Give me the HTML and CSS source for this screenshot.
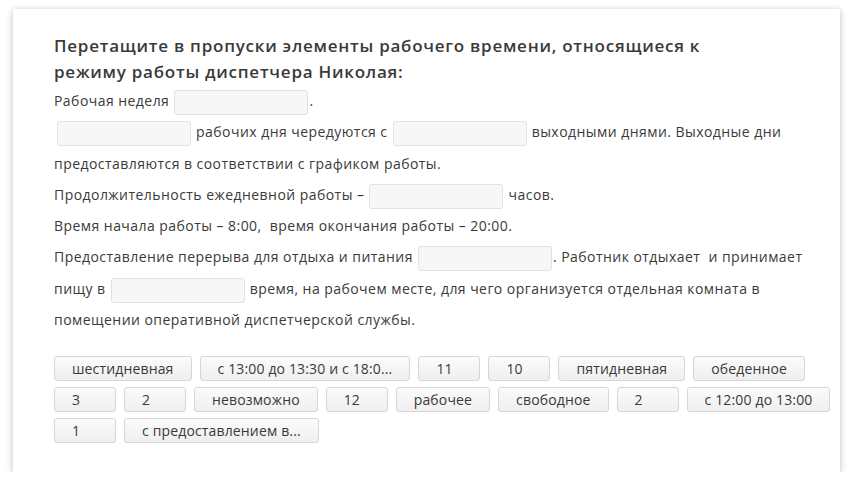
FILE: index.html
```html
<!DOCTYPE html>
<html lang="ru">
<head>
<meta charset="utf-8">
<link rel="stylesheet" href="styles.css">
</head>
<body>
<div class="card">
  <h1 class="title">Перетащите в пропуски элементы рабочего времени, относящиеся к режиму работы диспетчера Николая:</h1>
  <div class="text">
    <p>Рабочая неделя <span class="blank"></span>.</p>
    <p><span class="blank first"></span> рабочих дня чередуются с <span class="blank"></span> выходными днями. Выходные дни предоставляются в соответствии с графиком работы.</p>
    <p>Продолжительность ежедневной работы – <span class="blank"></span> часов.</p>
    <p>Время начала работы – 8:00,&nbsp; время окончания работы – 20:00.</p>
    <p>Предоставление перерыва для отдыха и питания <span class="blank"></span>. Работник отдыхает&nbsp; и принимает пищу в <span class="blank"></span> время, на рабочем месте, для чего организуется отдельная комната в помещении оперативной диспетчерской службы.</p>
  </div>
  <div class="chips">
    <span class="chip">шестидневная</span>
    <span class="chip">с 13:00 до 13:30 и с 18:0...</span>
    <span class="chip">11</span>
    <span class="chip">10</span>
    <span class="chip">пятидневная</span>
    <span class="chip">обеденное</span>
    <span class="chip">3</span>
    <span class="chip">2</span>
    <span class="chip">невозможно</span>
    <span class="chip">12</span>
    <span class="chip">рабочее</span>
    <span class="chip">свободное</span>
    <span class="chip">2</span>
    <span class="chip">с 12:00 до 13:00</span>
    <span class="chip">1</span>
    <span class="chip">с предоставлением в...</span>
  </div>
</div>
</body>
</html>
```
FILE: styles.css
```css
* { box-sizing: border-box; }
html, body { margin: 0; padding: 0; background: #ffffff; }
body {
  padding: 9px 12px 0 13px;
  font-family: "Open Sans", "Noto Sans", sans-serif;
  color: #3a3a3a;
}
.card {
  width: 827px;
  height: 463px;
  background: #fff;
  box-shadow: 0 1px 6px rgba(0,0,0,0.22), 0 4px 10px rgba(0,0,0,0.06);
  padding: 24px 30px 0 41px;
}
.title {
  margin: 0;
  font-size: 17px;
  line-height: 26px;
  font-weight: 600;
  letter-spacing: 0.75px;
  color: #3a3a3a;
  width: 700px;
}
.text {
  width: 756px;
}
.text p {
  margin: 0;
  font-size: 14px;
  line-height: 31.3px;
  letter-spacing: 0.45px;
}
.blank {
  display: inline-block;
  width: 134px;
  height: 25px;
  vertical-align: middle;
  background: #f7f7f7;
  border: 1px solid #e2e2e2;
  border-radius: 3px;
  margin: 0 1px;
}
.blank.first { margin-left: 3px; }
.chips {
  margin-top: 21px;
  display: flex;
  flex-wrap: wrap;
  gap: 6px 8px;
  width: 780px;
}
.chip {
  display: inline-block;
  min-width: 62px;
  height: 25px;
  line-height: 23px;
  padding: 0 17px;
  font-size: 14px;
  letter-spacing: 0.15px;
  color: #3a3a3a;
  background: linear-gradient(#fbfbfb, #efefef);
  border: 1px solid #d6d6d6;
  border-radius: 3px;
  white-space: nowrap;
}
```
